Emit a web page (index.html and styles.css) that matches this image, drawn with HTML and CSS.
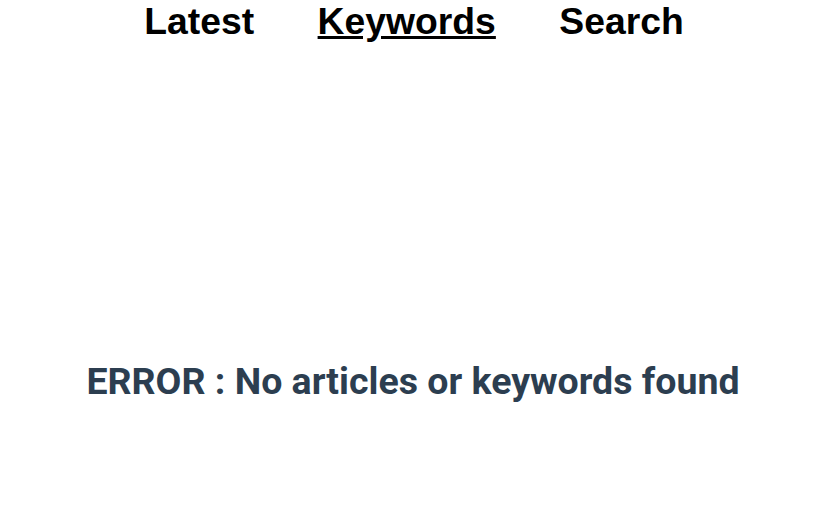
FILE: index.html
```html
<!DOCTYPE html>
<html>
<head>
<meta charset="utf-8">
<link rel="stylesheet" href="styles.css">
</head>
<body>
<div class="app">
  <nav class="nav">
    <a class="nav-link" href="#">Latest</a>
    <a class="nav-link active" href="#">Keywords</a>
    <a class="nav-link" href="#">Search</a>
  </nav>
  <main class="content">
    <h2 class="error">ERROR : No articles or keywords found</h2>
  </main>
</div>
</body>
</html>
```
FILE: styles.css
```css
html, body {
  margin: 0;
  padding: 0;
  background: #ffffff;
}
.app {
  width: 830px;
  height: 525px;
}
.nav {
  display: flex;
  justify-content: center;
  gap: 63.5px;
  padding-right: 2px;
  height: 42px;
  align-items: center;
}
.nav-link {
  font-family: "Liberation Sans", Arial, sans-serif;
  font-weight: bold;
  font-size: 37.3px;
  line-height: 42px;
  color: #000000;
  text-decoration: none;
}
.nav-link.active {
  text-decoration: underline;
}
.content {
  display: flex;
  justify-content: center;
  padding-top: 317px;
  padding-right: 4px;
}
.error {
  margin: 0;
  font-family: Roboto, sans-serif;
  font-weight: bold;
  font-size: 37.5px;
  line-height: 44px;
  color: #2c3e50;
}
```
